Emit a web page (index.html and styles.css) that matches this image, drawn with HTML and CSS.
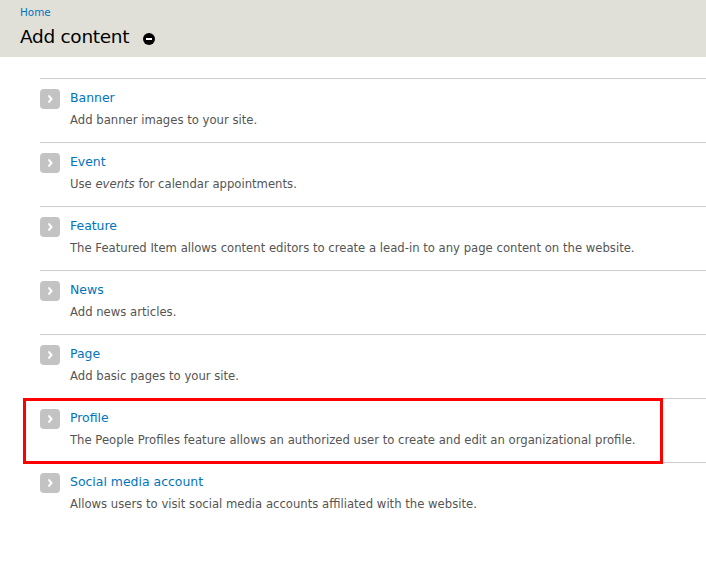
FILE: index.html
```html
<!DOCTYPE html>
<html>
<head>
<meta charset="utf-8">
<link rel="stylesheet" href="styles.css">
</head>
<body>
<header class="head">
  <a class="crumb" href="#">Home</a>
  <h1 class="title">Add content <span class="shortcut"></span></h1>
</header>
<main class="main">
  <ul class="types">
    <li class="type">
      <span class="chev"><svg width="20" height="20" viewBox="0 0 20 20"><path d="M8.5 6.5 L11.5 10 L8.5 13.5" fill="none" stroke="#fff" stroke-width="2"/></svg></span>
      <div class="info"><a class="name" href="#">Banner</a><div class="desc">Add banner images to your site.</div></div>
    </li>
    <li class="type">
      <span class="chev"><svg width="20" height="20" viewBox="0 0 20 20"><path d="M8.5 6.5 L11.5 10 L8.5 13.5" fill="none" stroke="#fff" stroke-width="2"/></svg></span>
      <div class="info"><a class="name" href="#">Event</a><div class="desc">Use <em>events</em> for calendar appointments.</div></div>
    </li>
    <li class="type">
      <span class="chev"><svg width="20" height="20" viewBox="0 0 20 20"><path d="M8.5 6.5 L11.5 10 L8.5 13.5" fill="none" stroke="#fff" stroke-width="2"/></svg></span>
      <div class="info"><a class="name" href="#">Feature</a><div class="desc">The Featured Item allows content editors to create a lead-in to any page content on the website.</div></div>
    </li>
    <li class="type">
      <span class="chev"><svg width="20" height="20" viewBox="0 0 20 20"><path d="M8.5 6.5 L11.5 10 L8.5 13.5" fill="none" stroke="#fff" stroke-width="2"/></svg></span>
      <div class="info"><a class="name" href="#">News</a><div class="desc">Add news articles.</div></div>
    </li>
    <li class="type">
      <span class="chev"><svg width="20" height="20" viewBox="0 0 20 20"><path d="M8.5 6.5 L11.5 10 L8.5 13.5" fill="none" stroke="#fff" stroke-width="2"/></svg></span>
      <div class="info"><a class="name" href="#">Page</a><div class="desc">Add basic pages to your site.</div></div>
    </li>
    <li class="type marked">
      <span class="chev"><svg width="20" height="20" viewBox="0 0 20 20"><path d="M8.5 6.5 L11.5 10 L8.5 13.5" fill="none" stroke="#fff" stroke-width="2"/></svg></span>
      <div class="info"><a class="name" href="#">Profile</a><div class="desc">The People Profiles feature allows an authorized user to create and edit an organizational profile.</div></div>
      <span class="highlight"></span>
    </li>
    <li class="type last">
      <span class="chev"><svg width="20" height="20" viewBox="0 0 20 20"><path d="M8.5 6.5 L11.5 10 L8.5 13.5" fill="none" stroke="#fff" stroke-width="2"/></svg></span>
      <div class="info"><a class="name" href="#">Social media account</a><div class="desc">Allows users to visit social media accounts affiliated with the website.</div></div>
    </li>
  </ul>
</main>
</body>
</html>
```
FILE: styles.css
```css
html, body {
  margin: 0;
  padding: 0;
  background: #fff;
}
body {
  font-family: "DejaVu Sans", Verdana, sans-serif;
  font-size: 12px;
  color: #333;
}
a {
  color: #0074bd;
  text-decoration: none;
}
.head {
  background: #e0e0d8;
  height: 57px;
  padding: 5px 0 0 20px;
  box-sizing: border-box;
}
.crumb {
  display: block;
  font-size: 10.4px;
  line-height: 14px;
}
.title {
  margin: 6px 0 0 0;
  font-weight: normal;
  font-size: 18.5px;
  letter-spacing: -0.3px;
  line-height: 24px;
  color: #000;
  display: flex;
  align-items: center;
}
.shortcut {
  display: inline-block;
  width: 12px;
  height: 12px;
  border-radius: 50%;
  background: #000;
  margin-left: 14px;
  margin-top: 4px;
  position: relative;
}
.shortcut::after {
  content: "";
  position: absolute;
  left: 3px;
  top: 5px;
  width: 6px;
  height: 2px;
  background: #fff;
}
.main {
  padding: 21px 0 0 40px;
}
.types {
  list-style: none;
  margin: 0;
  padding: 0;
  border-top: 1px solid #ccc;
}
.type {
  position: relative;
  display: flex;
  gap: 10px;
  height: 64px;
  box-sizing: border-box;
  padding-top: 10px;
  border-bottom: 1px solid #ccc;
}
.type.last {
  border-bottom: none;
}
.chev {
  width: 20px;
  height: 20px;
  border-radius: 4px;
  background: #c3c3c3;
  flex: none;
  display: flex;
}
.info {
  display: flex;
  flex-direction: column;
}
.name {
  font-size: 12.45px;
  line-height: 18px;
}
.desc {
  margin-top: 5px;
  font-size: 11.65px;
  line-height: 16px;
  color: #555;
}
.highlight {
  position: absolute;
  left: -17px;
  top: -1px;
  width: 640px;
  height: 66px;
  box-sizing: border-box;
  border: 3px solid #f00;
}
```
